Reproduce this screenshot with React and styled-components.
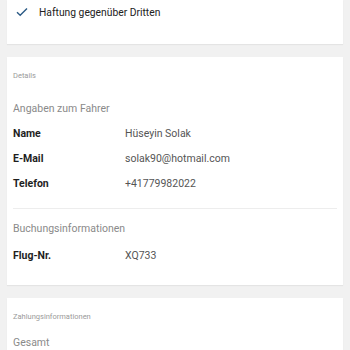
import React from 'react';
import styled, {createGlobalStyle} from 'styled-components';

const GlobalStyle = createGlobalStyle`
  html, body {
    margin: 0;
    padding: 0;
    background: #f1f1f1;
    font-family: Roboto, "Liberation Sans", sans-serif;
  }
`

const driver = [
  {label: 'Name', value: 'Hüseyin Solak'},
  {label: 'E-Mail', value: 'solak90@hotmail.com'},
  {label: 'Telefon', value: '+41779982022'},
]

const booking = [
  {label: 'Flug-Nr.', value: 'XQ733'},
]

const CheckIcon = () => (
  <svg width="12" height="10" viewBox="0 0 12 10">
    <path d="M1 5.2 L4.2 8.3 L11 1.5" fill="none" stroke="#2c5b86" strokeWidth="1.4" />
  </svg>
)

class App extends React.Component {
  render() {
    return (
      <Page>
        <GlobalStyle />
        <Card pad="4px 6px 24px">
          <CheckRow>
            <CheckIcon />
            <CheckText>Haftung gegenüber Dritten</CheckText>
          </CheckRow>
        </Card>

        <Card pad="13px 6px 17px">
          <Caption>Details</Caption>
          <SectionTitle gap="17px" after="2px">Angaben zum Fahrer</SectionTitle>
          {driver.map(row => (
            <Row key={row.label}>
              <Label>{row.label}</Label>
              <Value>{row.value}</Value>
            </Row>
          ))}
          <Divider />
          <SectionTitle>Buchungsinformationen</SectionTitle>
          {booking.map(row => (
            <Row key={row.label}>
              <Label>{row.label}</Label>
              <Value>{row.value}</Value>
            </Row>
          ))}
        </Card>

        <Card pad="13px 6px 20px">
          <Caption>Zahlungsinformationen</Caption>
          <SectionTitle gap="10px">Gesamt</SectionTitle>
        </Card>
      </Page>
    )
  }
}

const Page = styled.div`
  display: flex;
  flex-direction: column;
  gap: 13px;
  padding: 0 7px;
  height: 350px;
  overflow: hidden;
`

const Card = styled.div`
  background: #fff;
  padding: ${props => props.pad};
  box-shadow: 0 1px 1px rgba(0, 0, 0, 0.05);
  flex-shrink: 0;
`

const CheckRow = styled.div`
  display: flex;
  align-items: center;
  gap: 11px;
  padding-left: 3px;
  height: 16px;
`

const CheckText = styled.span`
  font-size: 10.3px;
  color: #222;
`

const Caption = styled.div`
  font-size: 7.5px;
  line-height: 12px;
  color: #9a9a9a;
`

const SectionTitle = styled.div`
  font-size: 10.5px;
  line-height: 20px;
  color: #8a8a8a;
  margin-top: ${props => props.gap || '0'};
  margin-bottom: ${props => props.after || '4px'};
`

const Row = styled.div`
  display: flex;
  align-items: center;
  height: 25px;
`

const Label = styled.span`
  width: 112px;
  font-size: 10.5px;
  font-weight: 700;
  color: #1e1e1e;
`

const Value = styled.span`
  font-size: 10.5px;
  color: #555;
`

const Divider = styled.div`
  height: 1px;
  background: #ededed;
  margin: 12px 0 10px;
`

export default App
